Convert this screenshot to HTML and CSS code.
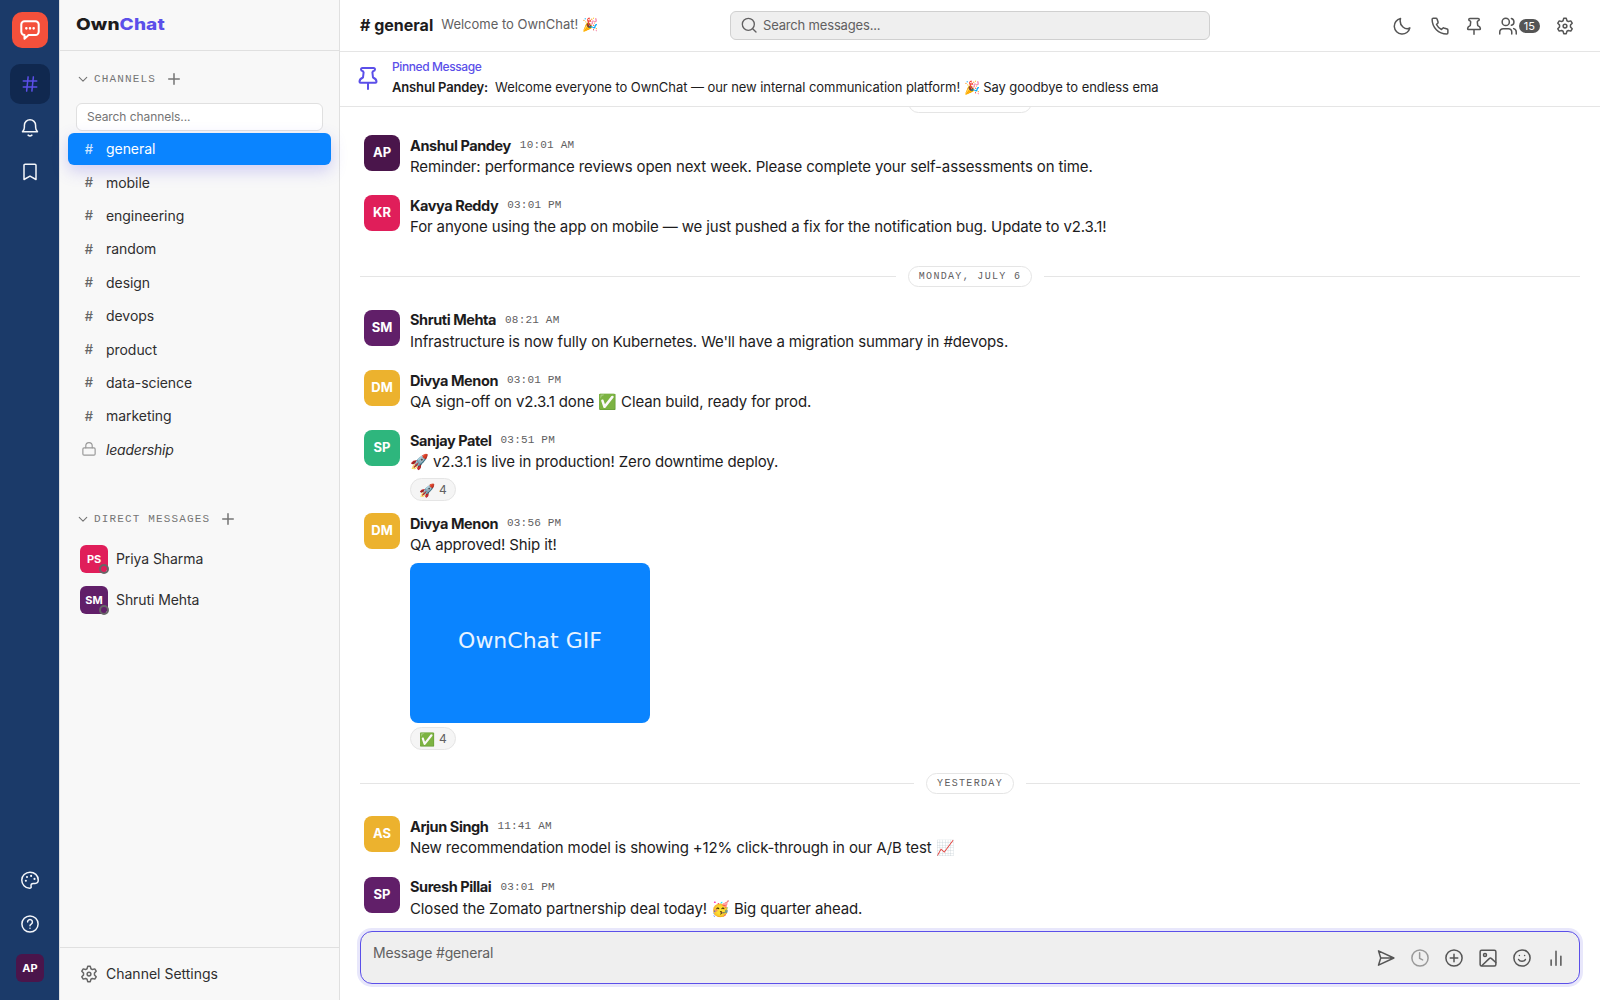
FILE: index.html
```
<!DOCTYPE html>
<html lang="en">
<head>
    <meta charset="UTF-8">
    <meta name="viewport" content="width=device-width, initial-scale=1.0">
    <title>OwnChat</title>
    <link rel="stylesheet" href="styles.css">
</head>
<body>
    <!-- Shared icons -->
    <svg class="sprite" xmlns="http://www.w3.org/2000/svg">
        <symbol id="i-hash" viewBox="0 0 24 24"><path d="M3 8h18M3 16h18M9.500 2.500 7.500 21.500M16.500 2.500l-2 19"/></symbol>
        <symbol id="i-gear" viewBox="0 0 24 24"><path d="M10.3 1.800h3.4l.9 3.200 1.900 1.100 3.200-.9 1.900 3.100-2.300 2.500v2.400l2.300 2.500-1.900 3.100-3.200-.9-1.900 1.100-.9 3.200h-3.400l-.9-3.200-1.900-1.100-3.200.9-1.900-3.100 2.300-2.500v-2.400L2.400 8.300l1.900-3.100 3.200.9L9.400 5z"/><circle cx="12" cy="12" r="2.500"/></symbol>
        <symbol id="i-pin" viewBox="0 0 24 24"><path d="M6.500 2h11c1 0 1.500.8 1.500 1.600 0 1-.8 1.500-2 1.700l-.6 1.200.6 5c2.500 1 3.500 2.300 3.500 4.200 0 .7-.4 1.100-1 1.100h-15c-.6 0-1-.4-1-1.100 0-1.900 1-3.200 3.500-4.200l.6-5L7 5.300C5.800 5.100 5 4.600 5 3.600 5 2.800 5.500 2 6.500 2zM12 17v6"/></symbol>
        <symbol id="i-plus" viewBox="0 0 24 24"><path d="M12 3v18M3 12h18"/></symbol>
        <symbol id="i-chevron" viewBox="0 0 24 24"><path d="m3 8 9 9 9-9"/></symbol>
    </svg>

    <div class="app">
        <nav class="rail">
            <div class="rail-logo">
                <svg class="icon" viewBox="0 0 24 24"><path d="M6 2.500h12a3.500 3.500 0 0 1 3.500 3.500v8a3.500 3.500 0 0 1-3.500 3.500h-7.500L6 21.500v-4A3.500 3.500 0 0 1 2.500 14V6A3.500 3.500 0 0 1 6 2.500z"/><path class="dots" d="M8 10.200h.01M12 10.200h.01M16 10.200h.01"/></svg>
            </div>
            <div class="rail-btn active"><svg class="icon"><use href="#i-hash"/></svg></div>
            <div class="rail-btn"><svg class="icon" viewBox="0 0 24 24"><path d="M2 17h20c-1.800-1.600-2.500-3.500-2.500-6V8.500a7.500 7.500 0 0 0-15 0V11c0 2.500-.7 4.400-2.500 6zM9.500 21.500c1.500 1.300 3.500 1.300 5 0"/></svg></div>
            <div class="rail-btn"><svg class="icon" viewBox="0 0 24 24"><path d="M5.500 1.500h13a1.500 1.500 0 0 1 1.500 1.500v19l-8-4.500L4 22V3a1.500 1.500 0 0 1 1.500-1.500z"/></svg></div>
            <div class="rail-bottom">
                <div class="rail-btn"><svg class="icon" viewBox="0 0 24 24"><path d="M12 1.500C6 1.500 1 6.200 1 12s4.500 11 10.500 11c1.500 0 2.200-.8 2-2-.6-3 .3-4.500 3-4.500h2.300c2.500 0 4.200-1.900 4.200-4.500 0-6-5-10.500-11-10.500z"/><path class="dots" d="M6.500 13h.01M8 8h.01M13.500 6.500h.01M18 10.500h.01"/></svg></div>
                <div class="rail-btn"><svg class="icon" viewBox="0 0 24 24"><circle cx="12" cy="12" r="10.800"/><path d="M8.800 9.200a3.200 3.200 0 1 1 5 2.800c-1.100.7-1.800 1.100-1.800 2.300M12 17.600v.01"/></svg></div>
                <div class="rail-btn"><span class="me">AP</span></div>
            </div>
        </nav>

        <aside class="sidebar">
            <div class="brand"><span class="brand-name">Own<b>Chat</b></span></div>
            <div class="section-title">
                <svg class="icon chevron"><use href="#i-chevron"/></svg>
                <span>CHANNELS</span>
                <svg class="icon plus"><use href="#i-plus"/></svg>
            </div>
            <input class="channel-search" type="text" placeholder="Search channels...">
            <ul class="channels">
                <li class="active"><i>#</i>general</li>
                <li><i>#</i>mobile</li>
                <li><i>#</i>engineering</li>
                <li><i>#</i>random</li>
                <li><i>#</i>design</li>
                <li><i>#</i>devops</li>
                <li><i>#</i>product</li>
                <li><i>#</i>data-science</li>
                <li><i>#</i>marketing</li>
                <li class="private"><i><svg class="icon" viewBox="0 0 24 24"><rect x="1.500" y="10" width="21" height="12.500" rx="2"/><path d="M6.500 10V6.500a5.500 5.500 0 0 1 11 0V10"/></svg></i><em>leadership</em></li>
            </ul>
            <div class="section-title dm-title">
                <svg class="icon chevron"><use href="#i-chevron"/></svg>
                <span>DIRECT MESSAGES</span>
                <svg class="icon plus"><use href="#i-plus"/></svg>
            </div>
            <div class="dm"><span class="dm-avatar pink">PS</span>Priya Sharma</div>
            <div class="dm"><span class="dm-avatar purple">SM</span>Shruti Mehta</div>
            <div class="sidebar-footer"><svg class="icon"><use href="#i-gear"/></svg>Channel Settings</div>
        </aside>

        <main class="main">
            <header class="topbar">
                <h1># general</h1>
                <span class="topic">Welcome to OwnChat! 🎉</span>
                <div class="search">
                    <svg class="icon" viewBox="0 0 24 24"><circle cx="11" cy="11" r="9"/><path d="m17.500 17.500 5 5"/></svg>
                    <span>Search messages...</span>
                </div>
                <div class="actions">
                    <svg class="icon" viewBox="0 0 24 24"><path d="M10 2A10.500 10.500 0 1 0 22.500 14.500C17 18 7.500 12 10 2z"/></svg>
                    <svg class="icon phone" viewBox="0 0 24 24"><path d="M1.500 3C1.500 2 2.100 1.500 3 1.500h3.600c.8 0 1.300.4 1.500 1.100l1.300 4.100c.2.700 0 1.300-.5 1.700L7.300 10c1.500 3 3.700 5.200 6.700 6.700l1.600-1.600c.4-.5 1-.7 1.600-.5l4.300 1.300c.7.200 1 .7 1 1.400V21c0 .9-.6 1.500-1.500 1.500C10 22.500 1.500 14 1.500 3z"/></svg>
                    <svg class="icon pin"><use href="#i-pin"/></svg>
                    <div class="members">
                        <svg class="icon" viewBox="0 0 24 24"><circle cx="9" cy="6.500" r="4.800"/><path d="M1 22.500V20a4.500 4.500 0 0 1 4.500-4.500h7A4.500 4.500 0 0 1 17 20v2.500M16.500 1.900a4.800 4.800 0 0 1 0 9.200M19.500 15.500c2.300.6 3.500 2.200 3.500 4.500v2.500"/></svg>
                        <span class="count">15</span>
                    </div>
                    <svg class="icon"><use href="#i-gear"/></svg>
                </div>
            </header>

            <div class="pinned">
                <svg class="icon"><use href="#i-pin"/></svg>
                <div>
                    <div class="pinned-label">Pinned Message</div>
                    <div class="pinned-text"><b>Anshul Pandey:</b><span>Welcome everyone to OwnChat — our new internal communication platform! 🎉 Say goodbye to endless ema</span></div>
                </div>
            </div>

            <section class="messages">
                <div class="divider"><span>SUNDAY, JULY 5</span></div>
                <article class="message">
                    <div class="avatar plum">AP</div>
                    <div class="content">
                        <div class="meta"><b>Anshul Pandey</b><time>10:01 AM</time></div>
                        <p>Reminder: performance reviews open next week. Please complete your self-assessments on time.</p>
                    </div>
                </article>
                <article class="message">
                    <div class="avatar pink">KR</div>
                    <div class="content">
                        <div class="meta"><b>Kavya Reddy</b><time>03:01 PM</time></div>
                        <p>For anyone using the app on mobile — we just pushed a fix for the notification bug. Update to v2.3.1!</p>
                    </div>
                </article>
                <div class="divider"><span>MONDAY, JULY 6</span></div>
                <article class="message">
                    <div class="avatar purple">SM</div>
                    <div class="content">
                        <div class="meta"><b>Shruti Mehta</b><time>08:21 AM</time></div>
                        <p>Infrastructure is now fully on Kubernetes. We'll have a migration summary in #devops.</p>
                    </div>
                </article>
                <article class="message">
                    <div class="avatar yellow">DM</div>
                    <div class="content">
                        <div class="meta"><b>Divya Menon</b><time>03:01 PM</time></div>
                        <p>QA sign-off on v2.3.1 done ✅ Clean build, ready for prod.</p>
                    </div>
                </article>
                <article class="message">
                    <div class="avatar green">SP</div>
                    <div class="content">
                        <div class="meta"><b>Sanjay Patel</b><time>03:51 PM</time></div>
                        <p>🚀 v2.3.1 is live in production! Zero downtime deploy.</p>
                        <div class="reaction"><span>🚀</span>4</div>
                    </div>
                </article>
                <article class="message">
                    <div class="avatar yellow">DM</div>
                    <div class="content">
                        <div class="meta"><b>Divya Menon</b><time>03:56 PM</time></div>
                        <p>QA approved! Ship it!</p>
                        <div class="gif">OwnChat GIF</div>
                        <div class="reaction"><span>✅</span>4</div>
                    </div>
                </article>
                <div class="divider"><span>YESTERDAY</span></div>
                <article class="message">
                    <div class="avatar yellow">AS</div>
                    <div class="content">
                        <div class="meta"><b>Arjun Singh</b><time>11:41 AM</time></div>
                        <p>New recommendation model is showing +12% click-through in our A/B test 📈</p>
                    </div>
                </article>
                <article class="message">
                    <div class="avatar purple">SP</div>
                    <div class="content">
                        <div class="meta"><b>Suresh Pillai</b><time>03:01 PM</time></div>
                        <p>Closed the Zomato partnership deal today! 🥳 Big quarter ahead.</p>
                    </div>
                </article>
            </section>

            <div class="composer">
                <span class="placeholder">Message #general</span>
                <div class="tools">
                    <svg class="icon" viewBox="0 0 24 24"><path d="m2 2.500 20.500 9.500L2 21.500 5 12zM5 12h17"/></svg>
                    <svg class="icon muted" viewBox="0 0 24 24"><circle cx="12" cy="12" r="10.800"/><path d="M11.500 5v7.500l4 2"/></svg>
                    <svg class="icon" viewBox="0 0 24 24"><circle cx="12" cy="12" r="10.800"/><path d="M12 7v10M7 12h10"/></svg>
                    <svg class="icon" viewBox="0 0 24 24"><rect x="1.500" y="1.500" width="21" height="21" rx="2"/><circle cx="8" cy="8" r="2"/><path d="M4 22 14 12.500c.7-.7 1.700-.7 2.400 0l6 5.500"/></svg>
                    <svg class="icon" viewBox="0 0 24 24"><circle cx="12" cy="12" r="10.800"/><path d="M7.500 14c1.500 3.200 7.500 3.200 9 0M8.500 8.700v.01M15.500 8.700v.01"/></svg>
                    <svg class="icon" viewBox="0 0 24 24"><path d="M5.500 14.500v7M12 3v18.500M18.500 9.500v12"/></svg>
                </div>
            </div>
        </main>
    </div>
</body>
</html>
```
FILE: styles.css
```
*,
*::before,
*::after {
    box-sizing: border-box;
}

body {
    margin: 0;
    font-family: Inter, "Noto Sans", sans-serif;
    color: #1d1c1d;
    background: #fff;
}

.sprite {
    display: none;
}

.icon {
    width: 18px;
    height: 18px;
    flex: none;
    fill: none;
    stroke: currentColor;
    stroke-width: 2;
    stroke-linecap: round;
    stroke-linejoin: round;
}

.icon .dots {
    stroke-width: 2.8;
}

.app {
    display: flex;
    height: 100vh;
    overflow: hidden;
}

/* Left rail */
.rail {
    width: 60px;
    flex: none;
    display: flex;
    flex-direction: column;
    align-items: center;
    gap: 4px;
    padding: 12px 0;
    background: #1b3a69;
    border-right: 1px solid #e0e0e0;
    color: #f4f6fa;
}

.rail-logo {
    width: 36px;
    height: 36px;
    margin: 0 0 12px 1px;
    display: flex;
    align-items: center;
    justify-content: center;
    background: #f4503b;
    border-radius: 10px;
    color: #fff;
}

.rail-logo .icon {
    width: 22px;
    height: 22px;
    stroke-width: 2.2;
}

.rail-btn {
    width: 40px;
    height: 40px;
    margin-left: 1px;
    display: flex;
    align-items: center;
    justify-content: center;
    border-radius: 10px;
}

.rail-btn.active {
    background: #10284f;
    color: #5b4fe9;
}

.rail-bottom {
    margin-top: auto;
    display: flex;
    flex-direction: column;
    gap: 4px;
}

.me {
    width: 28px;
    height: 28px;
    border-radius: 6px;
    background: #4a154b;
    color: #fff;
    font-size: 11px;
    font-weight: 700;
    line-height: 28px;
    text-align: center;
}

/* Sidebar */
.sidebar {
    width: 280px;
    flex: none;
    display: flex;
    flex-direction: column;
    background: #f8f8f8;
    border-right: 1px solid #e0e0e0;
}

.brand {
    height: 51px;
    flex: none;
    padding: 13px 16px 0;
    border-bottom: 1px solid #e0e0e0;
}

.brand-name {
    display: inline-block;
    font-size: 16px;
    font-weight: 800;
    line-height: 22px;
    letter-spacing: 0.1px;
    transform: scaleX(1.19);
    transform-origin: left;
}

.brand-name b {
    font-weight: 800;
    color: #5b4fe9;
}

.section-title {
    display: flex;
    align-items: center;
    height: 20px;
    margin: 18px 0 14px;
    padding-left: 18px;
    font-family: "Liberation Mono", monospace;
    font-size: 11px;
    letter-spacing: 1.15px;
    color: #757575;
}

.section-title .chevron {
    width: 10px;
    height: 10px;
    margin-right: 6px;
    stroke-width: 2.6;
}

.section-title .plus {
    width: 14px;
    height: 14px;
    margin-left: 11px;
    stroke-width: 2.6;
}

.channel-search {
    height: 28px;
    margin: 0 16px 2px;
    padding: 0 10px 1px;
    border: 1px solid #e0e0e0;
    border-radius: 6px;
    background: #fff;
    font-family: inherit;
    font-size: 12px;
    letter-spacing: -0.07px;
}

.channel-search::placeholder {
    color: #757575;
}

.channels {
    list-style: none;
    margin: 0;
    padding: 0 8px;
    display: grid;
    gap: 1.4px;
}

.channels li {
    height: 32px;
    display: flex;
    align-items: center;
    padding: 0 0 0.6px 12px;
    border-radius: 6px;
    font-size: 14px;
    letter-spacing: -0.05px;
    color: #2f2e2f;
}

.channels li.active {
    background: #0a84ff;
    color: #fff;
    box-shadow: 0 6px 16px rgba(91, 79, 233, 0.25);
}

.channels i {
    width: 18px;
    margin-right: 8px;
    display: flex;
    justify-content: center;
    font-size: 13px;
    font-style: normal;
    font-weight: 500;
    color: #666;
}

.channels .active i {
    color: #cfe5ff;
}

.channels .private i {
    color: #999;
}

.channels .private em {
    letter-spacing: -0.2px;
}

.channels .icon {
    width: 14px;
    height: 14px;
}

.dm-title {
    margin: 43px 0 16px;
}

.dm {
    display: flex;
    align-items: center;
    gap: 8px;
    height: 28px;
    margin: 0 0 13px 20px;
    font-size: 14px;
    letter-spacing: -0.08px;
    color: #2f2e2f;
}

.dm-avatar {
    position: relative;
    width: 28px;
    height: 28px;
    border-radius: 6px;
    color: #fff;
    font-size: 11px;
    font-weight: 700;
    line-height: 28px;
    text-align: center;
}

/* offline status ring */
.dm-avatar::after {
    content: "";
    position: absolute;
    right: -1px;
    bottom: -1px;
    width: 10px;
    height: 10px;
    border: 2px solid #666;
    border-radius: 50%;
}

.sidebar-footer {
    display: flex;
    align-items: center;
    gap: 8px;
    height: 53px;
    margin-top: auto;
    padding: 0 0 1px 20px;
    border-top: 1px solid #e0e0e0;
    font-size: 14px;
    color: #2f2e2f;
}

.sidebar-footer .icon {
    color: #666;
}

/* Main column */
.main {
    flex: 1;
    min-width: 0;
    display: flex;
    flex-direction: column;
}

.topbar {
    height: 52px;
    flex: none;
    display: grid;
    grid-template-columns: auto 1fr 480px 390px;
    align-items: center;
    padding-left: 20px;
    border-bottom: 1px solid #e5e5e5;
}

.topbar h1 {
    margin: -1px 0 0;
    font-size: 16px;
    font-weight: 700;
}

.topic {
    margin: -3px 0 0 8px;
    font-size: 13px;
    color: #616061;
}

.search {
    height: 29px;
    display: flex;
    align-items: center;
    gap: 6px;
    padding: 0 0 1px 10px;
    border: 1px solid #d0d0d0;
    border-radius: 6px;
    background: #efefef;
    font-size: 13px;
    letter-spacing: -0.17px;
    color: #616061;
}

.search .icon {
    width: 16px;
}

.actions {
    display: flex;
    align-items: center;
    justify-content: flex-end;
    padding-right: 26px;
    color: #555;
}

.phone {
    margin-left: 20px;
}

.pin {
    margin-left: 16px;
}

.members {
    display: flex;
    align-items: center;
    gap: 2px;
    margin: 0 16px;
}

.count {
    height: 14px;
    padding: 0 5px;
    border-radius: 7px;
    background: #555;
    color: #fff;
    font-size: 11px;
    line-height: 14px;
}

.pinned {
    height: 55px;
    flex: none;
    display: flex;
    align-items: center;
    gap: 12px;
    padding: 0 0 2px 16px;
    border-bottom: 1px solid #e5e5e5;
    background: #fff;
}

.pinned .icon {
    width: 24px;
    height: 24px;
    color: #5b4fe9;
}

.pinned-label {
    font-size: 12px;
    font-weight: 500;
    line-height: 18px;
    letter-spacing: -0.4px;
    color: #5b4fe9;
}

.pinned-text {
    font-size: 13px;
    line-height: 22px;
    letter-spacing: -0.07px;
}

.pinned-text b {
    margin-right: 7px;
    font-weight: 600;
    letter-spacing: -0.15px;
}

.messages {
    flex: 1;
    min-height: 0;
    overflow: hidden;
    display: flex;
    flex-direction: column;
    justify-content: flex-end;
    padding: 0 20px;
}

.divider {
    flex: none;
    display: flex;
    align-items: center;
    gap: 12px;
    margin: 16.4px 0;
}

.divider::before,
.divider::after {
    content: "";
    flex: 1;
    height: 1px;
    background: #e5e5e5;
}

.divider span {
    height: 21px;
    padding: 0 10px;
    border: 1px solid #e5e5e5;
    border-radius: 11px;
    font-family: "Liberation Mono", monospace;
    font-size: 10px;
    letter-spacing: 1.32px;
    line-height: 19px;
    color: #616061;
}

.message {
    flex: none;
    display: flex;
    gap: 10px;
    padding: 6px 4px;
}

.avatar {
    width: 36px;
    height: 36px;
    flex: none;
    border-radius: 8px;
    color: #fff;
    font-size: 13px;
    font-weight: 700;
    line-height: 35px;
    text-align: center;
}

.plum { background: #4a154b; }
.pink { background: #e01e5a; }
.purple { background: #611f69; }
.yellow { background: #ecb22e; }
.green { background: #2eb67d; }

.content {
    min-height: 48.4px;
}

.meta {
    display: flex;
    align-items: center;
    gap: 9px;
    height: 20px;
    font-size: 14.5px;
}

.meta b {
    font-weight: 700;
    letter-spacing: -0.42px;
}

.meta time {
    font-family: "Liberation Mono", monospace;
    font-size: 11px;
    letter-spacing: 0.2px;
    color: #616061;
}

.content p {
    margin: 0;
    font-size: 15px;
    line-height: 24px;
    letter-spacing: -0.13px;
}

.gif {
    width: 240px;
    height: 160px;
    margin-top: 6px;
    border-radius: 8px;
    background: #0a84ff;
    color: #e8f3ff;
    font-family: "DejaVu Sans", sans-serif;
    font-size: 22px;
    line-height: 155px;
    text-align: center;
}

.reaction {
    width: 46px;
    height: 23px;
    margin-top: 4px;
    display: flex;
    align-items: center;
    justify-content: center;
    gap: 4px;
    border: 1px solid #e5e5e5;
    border-radius: 12px;
    background: #f5f5f5;
    font-size: 12px;
    color: #616061;
}

.reaction span {
    font-size: 13px;
}

.composer {
    position: relative;
    height: 53px;
    flex: none;
    display: flex;
    justify-content: space-between;
    margin: 0 20px 16px;
    padding: 0 14px 0 12px;
    border: 1px solid #5b4fe9;
    border-radius: 12px;
    background: #efefef;
    box-shadow: 0 0 0 3px #e8e7fb;
}

.placeholder {
    margin-top: 11px;
    font-size: 14px;
    line-height: 20px;
    letter-spacing: -0.15px;
    color: #616061;
}

.tools {
    display: flex;
    align-items: center;
    gap: 16px;
    color: #555;
}

.tools .muted {
    color: #999;
}
```
